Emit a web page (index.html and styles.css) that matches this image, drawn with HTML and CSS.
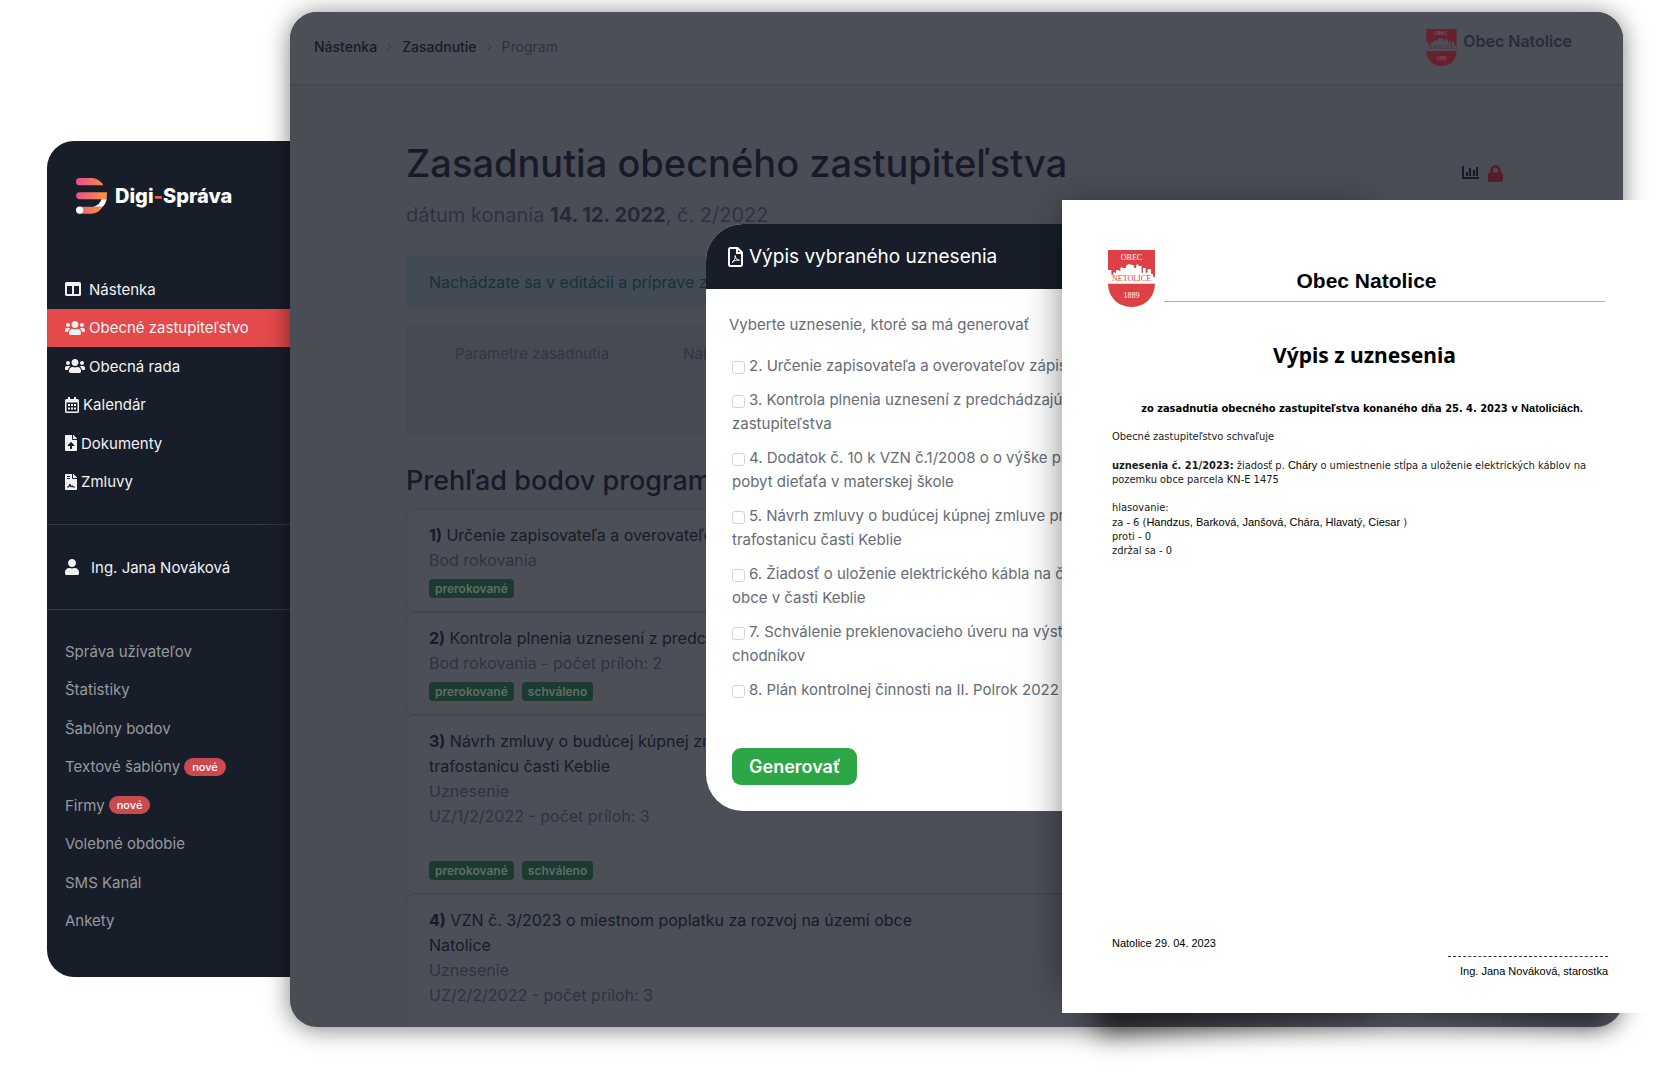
FILE: index.html
```html
<!DOCTYPE html>
<html lang="sk">
<head>
  <meta charset="UTF-8">
  <meta name="viewport" content="width=device-width, initial-scale=1.0">
  <title>Digi-Správa</title>
  <link rel="stylesheet" href="styles.css">
</head>
<body>
  <svg class="sprite" aria-hidden="true">
    <symbol id="i-users" viewBox="0 0 640 512"><path d="M96 224c35.3 0 64-28.7 64-64s-28.7-64-64-64-64 28.7-64 64 28.7 64 64 64zm448 0c35.3 0 64-28.7 64-64s-28.7-64-64-64-64 28.7-64 64 28.7 64 64 64zm32 32h-64c-17.6 0-33.5 7.1-45.1 18.6 40.3 22.1 68.9 62 75.1 109.4h66c17.7 0 32-14.3 32-32v-32c0-35.3-28.7-64-64-64zm-256 0c61.9 0 112-50.1 112-112S381.9 32 320 32 208 82.1 208 144s50.1 112 112 112zm76.8 32h-8.3c-20.8 10-43.9 16-68.5 16s-47.6-6-68.5-16h-8.3C179.6 288 128 339.6 128 403.2V432c0 26.5 21.5 48 48 48h288c26.5 0 48-21.5 48-48v-28.8c0-63.6-51.6-115.2-115.2-115.2zm-223.7-13.4C161.5 263.1 145.6 256 128 256H64c-35.3 0-64 28.7-64 64v32c0 17.7 14.3 32 32 32h65.9c6.3-47.4 34.9-87.3 75.2-109.4z"/></symbol>
    <symbol id="crest" viewBox="0 0 140 170">
      <path d="M0 0H140V80L136 82 134 72 128 70V57H118V68H112V54H104V68H100V48H92V44H84V54H78V46L70 44 62 42 54 46V54H44V52H37V62H32V60H24V68L16 66V74H10V60H0z"/>
      <path d="M0 101H140C139 140 112 170 70 170S1 140 0 101z"/>
    </symbol>
  </svg>

  <div class="stage">
    <aside class="sidebar">
      <a class="logo" href="#">
        <svg width="31" height="36" viewBox="0 0 94 109">
          <defs>
            <linearGradient id="brand" gradientUnits="userSpaceOnUse" x1="0" y1="0" x2="94" y2="20">
              <stop offset="0" stop-color="#e8489c"/>
              <stop offset="1" stop-color="#f7923c"/>
            </linearGradient>
          </defs>
          <path fill="url(#brand)" d="M11 0H45C62 0 75 8 83 22H11A11 11 0 0 1 11 0zM11 43H94L93 64H11A10 10 0 0 1 11 43zM11 87H81C72 101 60 108 45 108H11z"/>
          <path fill="#fff" d="M93 64C91 73 87 81 81 87H50C65 84 73 76 77 64z"/>
          <circle fill="#fff" cx="11" cy="97" r="11"/>
        </svg>
        <span>Digi<i>-</i>Správa</span>
      </a>

      <nav class="menu">
        <a href="#"><svg width="20" height="16" viewBox="0 0 20 16"><path fill-rule="evenodd" d="M1.500 1h13A1.500 1.500 0 0 1 16 2.500v11a1.500 1.500 0 0 1-1.500 1.500h-13A1.500 1.500 0 0 1 0 13.500v-11A1.500 1.500 0 0 1 1.500 1zM2 5v8h5V5zm7 0v8h5V5z"/></svg>Nástenka</a>
        <a class="active" href="#"><svg width="20" height="16"><use href="#i-users"/></svg>Obecné zastupiteľstvo</a>
        <a href="#"><svg width="20" height="16"><use href="#i-users"/></svg>Obecná rada</a>
        <a href="#"><svg width="14" height="16" viewBox="0 0 14 16"><path fill-rule="evenodd" d="M3 0h2v2h4V0h2v2h1.500A1.500 1.500 0 0 1 14 3.500v11a1.500 1.500 0 0 1-1.500 1.500h-11A1.500 1.500 0 0 1 0 14.500v-11A1.500 1.500 0 0 1 1.500 2H3zM1.500 5.500v9h11v-9zM3 7h2v2H3zm3 0h2v2H6zm3 0h2v2H9zM3 10.500h2v2H3zm3 0h2v2H6zm3 0h2v2H9z"/></svg>Kalendár</a>
        <a href="#"><svg width="12" height="16" viewBox="0 0 384 512"><path d="M224 136V0H24C10.700 0 0 10.700 0 24v464c0 13.300 10.700 24 24 24h336c13.300 0 24-10.700 24-24V160H248c-13.200 0-24-10.800-24-24zm65 216h-65v80c0 9-7 16-16 16h-32c-9 0-16-7-16-16v-80H95c-14 0-21-17-11-27l96-96c7-7 17-7 24 0l96 96c10 10 3 27-11 27zM377 105L279 7c-4-4-11-7-17-7h-6v128h128v-6c0-6-2-12-7-17z"/></svg>Dokumenty</a>
        <a href="#"><svg width="12" height="16" viewBox="0 0 384 512"><path fill-rule="evenodd" d="M224 136V0H24C10.700 0 0 10.700 0 24v464c0 13.300 10.700 24 24 24h336c13.300 0 24-10.700 24-24V160H248c-13 0-24-11-24-24zM64 64h96v32H64zm0 64h96v32H64zM64 400c40 0 50-10 64-56 12-40 48-40 60 0l12 36c16-30 50-30 64 8l4 12h52v32h-64c-18 0-24-12-34-30-10 30-42 38-54 6l-12-36c-16 46-34 60-92 60zM377 105L279 7c-4-4-11-7-17-7h-6v128h128v-6c0-6-2-12-7-17z"/></svg>Zmluvy</a>
      </nav>

      <a class="user" href="#"><svg width="14" height="16" viewBox="0 0 448 512"><path d="M224 256c70.700 0 128-57.300 128-128S294.700 0 224 0 96 57.300 96 128s57.300 128 128 128zm90 32h-17c-22 10-47 16-73 16s-51-6-73-16h-17C60 288 0 348 0 422v42c0 26 21 48 48 48h352c26 0 48-22 48-48v-42c0-74-60-134-134-134z"/></svg>Ing. Jana Nováková</a>

      <nav class="menu menu-admin">
        <a href="#">Správa užívateľov</a>
        <a href="#">Štatistiky</a>
        <a href="#">Šablóny bodov</a>
        <a href="#">Textové šablóny <span class="pill">nové</span></a>
        <a href="#">Firmy <span class="pill">nové</span></a>
        <a href="#">Volebné obdobie</a>
        <a href="#">SMS Kanál</a>
        <a href="#">Ankety</a>
      </nav>
    </aside>

    <main class="panel">
      <header class="topbar">
        <nav class="breadcrumb">
          <a href="#">Nástenka</a>
          <svg width="5" height="8" viewBox="0 0 5 8"><path d="M1 1l3 3-3 3"/></svg>
          <a href="#">Zasadnutie</a>
          <svg width="5" height="8" viewBox="0 0 5 8"><path d="M1 1l3 3-3 3"/></svg>
          <span>Program</span>
        </nav>
        <div class="town">
          <svg class="crest" width="31" height="37" viewBox="0 0 140 170">
            <use href="#crest"/>
            <text class="crest-light" x="70" y="28">OBEC</text>
            <text class="crest-red" x="70" y="93">NATOLICE</text>
            <text class="crest-light" x="70" y="144">1889</text>
          </svg>
          <span>Obec Natolice</span>
        </div>
      </header>

      <div class="content">
        <div class="heading">
          <h1>Zasadnutia obecného zastupiteľstva</h1>
          <div class="tools">
            <svg width="17" height="14" viewBox="0 0 17 14"><path d="M0 0h2v11h15v2H0zM4 6h2v4H4zM7 2h2v8H7zM11 4h2v6h-2zM14 1h2v9h-2z"/></svg>
            <svg class="lock" width="15" height="17" viewBox="0 0 448 512"><path d="M400 224h-24v-72C376 68 308 0 224 0S72 68 72 152v72H48c-26 0-48 22-48 48v192c0 26 22 48 48 48h352c26 0 48-22 48-48V272c0-26-22-48-48-48zm-104 0H152v-72c0-40 32-72 72-72s72 32 72 72v72z"/></svg>
          </div>
        </div>
        <p class="date">dátum konania <strong>14. 12. 2022</strong>, č. 2/2022</p>

        <div class="alert">Nachádzate sa v editácii a príprave zasadnutia</div>

        <div class="tabs">
          <a href="#">Parametre zasadnutia</a>
          <a href="#">Náhľad</a>
        </div>

        <h2>Prehľad bodov programu</h2>

        <article class="card">
          <h3><b>1)</b> Určenie zapisovateľa a overovateľov</h3>
          <p>Bod rokovania</p>
          <div class="badges"><span>prerokované</span></div>
        </article>
        <article class="card">
          <h3><b>2)</b> Kontrola plnenia uznesení z predch.</h3>
          <p>Bod rokovania - počet príloh: 2</p>
          <div class="badges"><span>prerokované</span><span>schváleno</span></div>
        </article>
        <article class="card">
          <h3><b>3)</b> Návrh zmluvy o budúcej kúpnej zmluve<br>trafostanicu časti Keblie</h3>
          <p>Uznesenie</p>
          <p>UZ/1/2/2022 - počet príloh: 3</p>
          <div class="badges badges-low"><span>prerokované</span><span>schváleno</span></div>
        </article>
        <article class="card card-last">
          <h3><b>4)</b> VZN č. 3/2023 o miestnom poplatku za rozvoj na území obce<br>Natolice</h3>
          <p>Uznesenie</p>
          <p>UZ/2/2/2022 - počet príloh: 3</p>
        </article>
      </div>
    </main>

    <form class="modal">
      <div class="modal-head">
        <svg width="15" height="20" viewBox="0 0 15 20"><path d="M2.500 1H9.500L14 5.500V17.500A1.500 1.500 0 0 1 12.500 19H2.500A1.500 1.500 0 0 1 1 17.500V2.500A1.500 1.500 0 0 1 2.500 1zM9 1V6H14"/><path class="thin" d="M4 15.500C6 14.500 7.500 11 7.200 8.500 7.500 11.500 9 13.500 11.500 13.200 9 12.500 6 13.500 4 15.500z"/></svg>
        <h4>Výpis vybraného uznesenia</h4>
      </div>
      <div class="modal-body">
        <p>Vyberte uznesenie, ktoré sa má generovať</p>
        <div class="checks">
          <label><input type="checkbox">2. Určenie zapisovateľa a overovateľov zápisnice</label>
          <label><input type="checkbox">3. Kontrola plnenia uznesení z predchádzajúceho<br>zastupiteľstva</label>
          <label><input type="checkbox">4. Dodatok č. 10 k VZN č.1/2008 o o výške príspevku<br>pobyt dieťaťa v materskej škole</label>
          <label><input type="checkbox">5. Návrh zmluvy o budúcej kúpnej zmluve pre<br>trafostanicu časti Keblie</label>
          <label><input type="checkbox">6. Žiadosť o uloženie elektrického kábla na časti<br>obce v časti Keblie</label>
          <label><input type="checkbox">7. Schválenie preklenovacieho úveru na výstavbu<br>chodníkov</label>
          <label><input type="checkbox">8. Plán kontrolnej činnosti na II. Polrok 2022</label>
        </div>
        <button type="button">Generovať</button>
      </div>
    </form>

    <section class="paper">
      <div class="sheet">
        <div class="sheet-head">
          <svg class="crest" width="47" height="57" viewBox="0 0 140 170">
            <use href="#crest"/>
            <text class="crest-light" x="70" y="30">OBEC</text>
            <text class="crest-red" x="70" y="93">NETOLICE</text>
            <text class="crest-light" x="70" y="144">1889</text>
          </svg>
          <h2>Obec Natolice</h2>
        </div>
        <h3>Výpis z uznesenia</h3>
        <p class="lead">zo zasadnutia obecného zastupiteľstva konaného dňa 25. 4. 2023 v <span>Natoliciách.</span></p>
        <p>Obecné zastupiteľstvo schvaľuje</p>
        <p><b>uznesenia č. 21/2023:</b> žiadosť p. <span>Cháry</span> o umiestnenie stĺpa a uloženie elektrických káblov na<br>pozemku obce parcela KN-E 1475</p>
        <p>hlasovanie:<br>za - 6 (<span>Handzus, Barková, Janšová, Chára, Hlavatý, Ciesar</span> )<br>proti - 0<br>zdržal sa - 0</p>
        <footer>
          <div class="place">Natolice 29. 04. 2023</div>
          <div class="sign">Ing. Jana Nováková, starostka</div>
        </footer>
      </div>
    </section>
  </div>
</body>
</html>
```
FILE: styles.css
```css
* {
  box-sizing: border-box;
}
body {
  margin: 0;
  background: #fff;
  font-family: Inter, "Liberation Sans", sans-serif;
  font-size: 16px;
}
h1, h2, h3, h4, p {
  margin: 0;
  font-weight: 400;
}
a {
  color: inherit;
  text-decoration: none;
}
svg {
  fill: currentColor;
  flex: none;
}
.sprite {
  position: absolute;
  width: 0;
  height: 0;
}
.stage {
  position: relative;
  display: flex;
  align-items: flex-start;
  padding: 12px 57px 53px 47px;
  overflow: hidden;
}

/* sidebar */
.sidebar {
  width: 243px;
  flex: none;
  margin-top: 129px;
  padding: 37px 0 37px;
  background: #181e29;
  color: #f1f1f2;
  border-radius: 27px 0 0 27px;
  font-size: 15px;
}
.logo {
  display: flex;
  align-items: center;
  gap: 8px;
  margin: 0 0 56px 29px;
  color: #fff;
  font-size: 20px;
  font-weight: 800;
}
.logo i {
  font-style: normal;
  color: #f0605f;
}
.menu {
  display: grid;
  grid-auto-rows: 1fr;
  height: 231px;
}
.menu a {
  display: flex;
  align-items: center;
  gap: 4px;
  padding-left: 18px;
}
.menu .active {
  background: #e4494b;
}
.user {
  display: flex;
  align-items: center;
  gap: 12px;
  height: 86px;
  margin: 23px 0 22px;
  padding-left: 18px;
  border-top: 1px solid #343945;
  border-bottom: 1px solid #343945;
}
.menu-admin {
  height: 308px;
  color: #97999e;
}
.pill {
  padding: 0 8px;
  border-radius: 9px;
  background: #cb4a50;
  color: #fff;
  font-size: 11px;
  font-weight: 500;
  line-height: 18px;
}

/* panel under the overlay */
.panel {
  position: relative;
  flex: 1;
  min-width: 0;
  background: #4a4d56;
  color: #171b28;
  border-radius: 27px;
  overflow: hidden;
  box-shadow: 0 2px 24px rgba(0,0,0,0.5);
}
.topbar {
  display: flex;
  justify-content: space-between;
  height: 73px;
  padding: 17px 51px 0 24px;
  background: #4c4f57;
  border-bottom: 1px solid #434650;
}
.breadcrumb {
  display: flex;
  align-items: center;
  gap: 10px;
  height: 35px;
  font-size: 14px;
  font-weight: 500;
}
.breadcrumb svg {
  fill: none;
  stroke: #343845;
}
.breadcrumb span {
  color: #2e3240;
  font-weight: 400;
}
.town {
  display: flex;
  gap: 6px;
  color: #282c3a;
  font-weight: 600;
  line-height: 24px;
}
.crest {
  color: #dd4045;
  font-family: "Liberation Serif", serif;
  font-size: 24px;
  font-weight: 400;
  text-anchor: middle;
}
.crest-light {
  fill: #fff;
}
.town .crest {
  color: #66202e;
}
.town .crest-light {
  fill: #7d6570;
}
.content {
  padding: 50px 120px 0 116px;
}
.heading {
  display: flex;
  justify-content: space-between;
  align-items: center;
}
h1 {
  font-size: 38px;
  font-weight: 500;
  line-height: 56px;
}
.tools {
  display: flex;
  align-items: center;
  gap: 9px;
  padding-top: 20px;
}
.lock {
  color: #561c2b;
}
.date {
  margin: 8px 0 24px;
  color: #2f3342;
  font-size: 20px;
  line-height: 32px;
}
.date strong {
  color: #252937;
}
.alert {
  height: 53px;
  padding: 0 22px;
  border: 1px solid #3c4c59;
  border-radius: 4px;
  background: #424a54;
  color: #15323d;
  line-height: 52px;
}
.tabs {
  display: flex;
  gap: 74px;
  height: 112px;
  margin: 16px 0 23px;
  padding: 18px 49px;
  border-radius: 10px;
  background: #474a53;
  color: #323644;
  font-size: 15px;
  line-height: 24px;
}
.content h2 {
  margin-bottom: 7px;
  font-size: 27px;
  font-weight: 500;
  line-height: 43px;
}
.card {
  padding: 13px 22px;
  border: 1px solid #444750;
  border-radius: 8px;
  background: #4c4f57;
  line-height: 25px;
}
.card h3 {
  font-size: 16px;
}
.card p {
  color: #2f3342;
}
.card-last {
  padding-bottom: 19px;
  border-bottom: 0;
  border-radius: 8px 8px 0 0;
}
.badges {
  display: flex;
  gap: 8px;
  margin-top: 6px;
}
.badges span {
  padding: 0 6px;
  border-radius: 4px;
  background: #1c3b30;
  color: #5c6e68;
  font-size: 12px;
  font-weight: 600;
  line-height: 19px;
}
.badges-low {
  margin-top: 32px;
}

/* modal window */
.modal {
  position: absolute;
  top: 224px;
  left: 706px;
  width: 500px;
  border-radius: 37px;
  background: #fff;
  color: #666c76;
  font-size: 15px;
  overflow: hidden;
}
.modal-head {
  display: flex;
  align-items: center;
  gap: 6px;
  height: 65px;
  padding-left: 22px;
  background: #181e29;
  color: #fff;
}
.modal-head svg {
  fill: none;
  stroke: #fff;
  stroke-width: 2;
}
.modal-head .thin {
  stroke-width: 1;
}
h4 {
  font-size: 19px;
}
.modal-body {
  padding: 24px 24px 26px 23px;
  line-height: 24px;
}
.checks {
  display: flex;
  flex-direction: column;
  gap: 10px;
  margin: 17px 0 46px 3px;
}
.checks input {
  appearance: none;
  width: 13px;
  height: 13px;
  margin: 0 4px 0 0;
  border: 1px solid #d3d4d6;
  border-radius: 3px;
  vertical-align: -3px;
}
.modal button {
  display: block;
  height: 37px;
  margin-left: 3px;
  padding: 0 17px;
  border: 0;
  border-radius: 9px;
  background: #2da745;
  color: #fff;
  font-family: inherit;
  font-size: 18px;
  font-weight: 600;
}

/* printed document */
.paper {
  position: absolute;
  top: 200px;
  right: 24px;
  width: 594px;
  isolation: isolate;
}
.paper::before {
  content: "";
  position: absolute;
  z-index: -1;
  top: 10px;
  bottom: 20px;
  left: 4px;
  width: 300px;
  box-shadow: -2px 0 36px rgba(0,0,0,0.5);
}
/* lifted corners */
.sheet::before, .sheet::after {
  content: "";
  position: absolute;
  z-index: -1;
  bottom: 24px;
  left: 30px;
  width: 280px;
  height: 60px;
  box-shadow: 0 34px 28px rgba(0,0,0,0.6);
  transform: rotate(-5deg);
}
.sheet::after {
  left: auto;
  right: 50px;
  width: 220px;
  box-shadow: 0 24px 24px rgba(0,0,0,0.6);
  transform: rotate(4deg);
}
.sheet {
  display: flex;
  flex-direction: column;
  height: 813px;
  padding: 50px 48px 35px 50px;
  color: #1a1a1a;
  font-family: "DejaVu Sans Condensed", "Noto Sans", sans-serif;
  font-size: 11px;
  line-height: 14px;
  background: #fff;
}
.sheet-head {
  display: flex;
  gap: 9px;
  margin: 0 3px 0 -4px;
}
.sheet-head h2 {
  flex: 1;
  height: 52px;
  padding-right: 36px;
  border-bottom: 1px solid #aaa;
  color: #000;
  font-family: "Liberation Sans", sans-serif;
  font-size: 21px;
  font-weight: 700;
  line-height: 61px;
  text-align: center;
}
.sheet h3 {
  margin: 32px 0 30px;
  padding-left: 9px;
  color: #000;
  font-family: "Noto Sans", sans-serif;
  font-size: 21px;
  font-weight: 700;
  line-height: 32px;
  text-align: center;
}
.sheet p {
  margin-bottom: 14px;
}
.sheet .lead {
  padding-left: 4px;
  color: #000;
  font-weight: 700;
  text-align: center;
}
.sheet span, .sheet footer {
  color: #000;
  font-family: "Liberation Sans", sans-serif;
}
.sheet footer {
  margin-top: auto;
}
.sign {
  width: 160px;
  margin: 6px 0 0 auto;
  padding-top: 7px;
  border-top: 1px dashed #333;
  text-align: right;
}
```
